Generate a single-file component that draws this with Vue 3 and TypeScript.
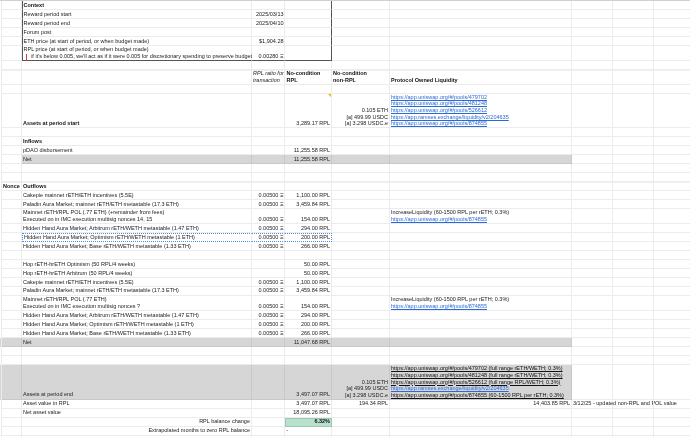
<script setup lang="ts">
interface Cell {
  t?: string
  lines?: string[]
  cls?: string
}
interface Row {
  h: number
  cls?: string
  a?: Cell
  b?: Cell
  c?: Cell
  d?: Cell
  e?: Cell
  f?: Cell
  g?: Cell
}
const E = '0.00500 Ξ'
const rows: Row[] = [
  { h: 9, cls: 'ctx first', b: { t: 'Context', cls: 'bold' } },
  { h: 9, cls: 'ctx', b: { t: 'Reward period start' }, c: { t: '2025/03/13', cls: 'right' } },
  { h: 9, cls: 'ctx', b: { t: 'Reward period end' }, c: { t: '2025/04/10', cls: 'right' } },
  { h: 9, cls: 'ctx', b: { t: 'Forum post' } },
  { h: 9, cls: 'ctx', b: { t: 'ETH price (at start of period, or when budget made)' }, c: { t: '$1,904.28', cls: 'right' } },
  { h: 15, cls: 'ctx last', b: { lines: ['RPL price (at start of period, or when budget made)', '     if it\'s below 0.005, we\'ll act as if it were 0.005 for discretionary spending to preserve budget'] }, c: { t: '0.00280 Ξ', cls: 'right' } },
  { h: 9 },
  { h: 15, cls: 'thicktop', c: { lines: ['RPL ratio for', 'transaction'], cls: 'ital' }, d: { lines: ['No-condition', 'RPL'], cls: 'bold' }, e: { lines: ['No-condition', 'non-RPL'], cls: 'bold' }, f: { t: 'Protocol Owned Liquidity', cls: 'bold' } },
  { h: 9 },
  {
    h: 34,
    b: { t: 'Assets at period start', cls: 'bold' },
    d: { t: '3,289.17 RPL', cls: 'right' },
    e: { lines: ['0.105 ETH', '[a] 499.99 USDC', '[a] 3.298 USDC.e'], cls: 'right tight' },
    f: { lines: ['https://app.uniswap.org/#/pools/479702', 'https://app.uniswap.org/#/pools/481248', 'https://app.uniswap.org/#/pools/526612', 'https://app.ramses.exchange/liquidity/v2/204635', 'https://app.uniswap.org/#/pools/874855'], cls: 'link tight' },
  },
  { h: 9 },
  { h: 9, b: { t: 'Inflows', cls: 'bold' } },
  { h: 9, b: { t: 'pDAO disbursement' }, d: { t: '11,255.58 RPL', cls: 'right' } },
  { h: 9, cls: 'grey', b: { t: 'Net' }, d: { t: '11,255.58 RPL', cls: 'right' } },
  { h: 9 },
  { h: 9 },
  { h: 9, cls: 'thicktop', a: { t: 'Nonce', cls: 'bold' }, b: { t: 'Outflows', cls: 'bold' } },
  { h: 9, b: { t: 'Cakepie mainnet rETH/ETH incentives (5.5E)' }, c: { t: E, cls: 'right' }, d: { t: '1,100.00 RPL', cls: 'right' } },
  { h: 9, b: { t: 'Paladin Aura Market; mainnet rETH/ETH metastable (17.3 ETH)' }, c: { t: E, cls: 'right' }, d: { t: '3,459.84 RPL', cls: 'right' } },
  {
    h: 15,
    b: { lines: ['Mainnet rETH/RPL POL (.77 ETH) (+remainder from fees)', 'Executed on in IMC execution multisig nonces 14, 15'] },
    c: { t: E, cls: 'right' },
    d: { t: '154.00 RPL', cls: 'right' },
    f: { lines: ['IncreaseLiquidity (60-1500 RPL per rETH; 0.3%)', 'https://app.uniswap.org/#/pools/874855'], cls: 'mixed' },
  },
  { h: 9, b: { t: 'Hidden Hand Aura Market; Arbitrum rETH/WETH metastable (1.47 ETH)' }, c: { t: E, cls: 'right' }, d: { t: '294.00 RPL', cls: 'right' } },
  { h: 9, cls: 'dashed', b: { t: 'Hidden Hand Aura Market; Optimism rETH/WETH metastable (1 ETH)' }, c: { t: E, cls: 'right' }, d: { t: '200.00 RPL', cls: 'right' } },
  { h: 9, b: { t: 'Hidden Hand Aura Market; Base rETH/WETH metastable (1.33 ETH)' }, c: { t: E, cls: 'right' }, d: { t: '266.00 RPL', cls: 'right' } },
  { h: 9 },
  { h: 9, b: { t: 'Hop rETH-hrETH Optimism (50 RPL/4 weeks)' }, d: { t: '50.00 RPL', cls: 'right' } },
  { h: 9, b: { t: 'Hop rETH-hrETH Arbitrum (50 RPL/4 weeks)' }, d: { t: '50.00 RPL', cls: 'right' } },
  { h: 9, b: { t: 'Cakepie mainnet rETH/ETH incentives (5.5E)' }, c: { t: E, cls: 'right' }, d: { t: '1,100.00 RPL', cls: 'right' } },
  { h: 8.5, b: { t: 'Paladin Aura Market; mainnet rETH/ETH metastable (17.3 ETH)' }, c: { t: E, cls: 'right' }, d: { t: '3,459.84 RPL', cls: 'right' } },
  {
    h: 15.5,
    b: { lines: ['Mainnet rETH/RPL POL (.77 ETH)', 'Executed on in IMC execution multisig nonces ?'] },
    c: { t: E, cls: 'right' },
    d: { t: '154.00 RPL', cls: 'right' },
    f: { lines: ['IncreaseLiquidity (60-1500 RPL per rETH; 0.3%)', 'https://app.uniswap.org/#/pools/874855'], cls: 'mixed' },
  },
  { h: 9, b: { t: 'Hidden Hand Aura Market; Arbitrum rETH/WETH metastable (1.47 ETH)' }, c: { t: E, cls: 'right' }, d: { t: '294.00 RPL', cls: 'right' } },
  { h: 9, b: { t: 'Hidden Hand Aura Market; Optimism rETH/WETH metastable (1 ETH)' }, c: { t: E, cls: 'right' }, d: { t: '200.00 RPL', cls: 'right' } },
  { h: 9, b: { t: 'Hidden Hand Aura Market; Base rETH/WETH metastable (1.33 ETH)' }, c: { t: E, cls: 'right' }, d: { t: '266.00 RPL', cls: 'right' } },
  { h: 9, cls: 'grey full', b: { t: 'Net' }, d: { t: '11,047.68 RPL', cls: 'right' } },
  { h: 8.5 },
  { h: 9 },
  {
    h: 35,
    cls: 'grey full',
    b: { t: 'Assets at period end' },
    d: { t: '3,497.07 RPL', cls: 'right' },
    e: { lines: ['0.105 ETH', '[a] 499.99 USDC', '[a] 3.298 USDC.e'], cls: 'right tight' },
    f: { lines: ['https://app.uniswap.org/#/pools/479702 (full range rETH/WETH; 0.3%)', 'https://app.uniswap.org/#/pools/481248 (full range rETH/WETH; 0.3%)', 'https://app.uniswap.org/#/pools/526612 (full range RPL/WETH; 0.3%)', 'https://app.ramses.exchange/liquidity/v2/204635', 'https://app.uniswap.org/#/pools/874855 (60-1500 RPL per rETH; 0.3%)'], cls: 'darklink tight' },
  },
  {
    h: 9,
    b: { t: 'Asset value in RPL' },
    d: { t: '3,497.07 RPL', cls: 'right' },
    e: { t: '194.34 RPL', cls: 'right' },
    f: { t: '14,403.85 RPL', cls: 'right' },
    g: { t: '3/12/25 - updated non-RPL and POL value' },
  },
  { h: 9, b: { t: 'Net asset value' }, d: { t: '18,095.26 RPL', cls: 'right' } },
  { h: 9, b: { t: 'RPL balance change', cls: 'right' }, d: { t: '6.32%', cls: 'right bold green' } },
  { h: 9, b: { t: 'Extrapolated months to zero RPL balance', cls: 'right' }, d: { t: '-' } },
  { h: 9 },
]
const cols = ['a', 'b', 'c', 'd', 'e', 'f', 'g', 'h', 'i'] as const
function cell(r: Row, c: (typeof cols)[number]): Cell | undefined {
  return c === 'h' || c === 'i' ? undefined : r[c]
}
</script>

<template>
  <div class="sheet">
    <div v-for="(r, i) in rows" :key="i" class="row" :class="r.cls" :style="{ height: r.h + 'px' }">
      <div class="gutter"></div>
      <div v-for="c in cols" :key="c" class="cell" :class="['col-' + c, cell(r, c)?.cls]">
        <template v-if="cell(r, c)?.lines">
          <span v-for="(l, j) in cell(r, c)?.lines" :key="j" class="line">{{ l }}</span>
        </template>
        <span v-else-if="cell(r, c)?.t" class="line">{{ cell(r, c)?.t }}</span>
      </div>
    </div>
    <span class="flag"></span>
    <span class="note"></span>
  </div>
</template>

<style scoped>
.sheet {
  position: relative;
  width: 690px;
  height: 437px;
  overflow: hidden;
  background: #fff;
  border-top: 1px solid #d0d0d0;
  box-sizing: border-box;
  font-family: "Liberation Sans", Arial, sans-serif;
  font-size: 5.5px;
  line-height: 7.2px;
  color: #222;
  filter: blur(0.3px);
}
.row {
  display: flex;
  box-sizing: border-box;
  position: relative;
}
.gutter {
  flex: 0 0 1.5px;
  border-right: 1px solid #eaeaea;
  box-sizing: border-box;
}
.cell {
  box-sizing: border-box;
  border-right: 1px solid #ececec;
  border-bottom: 1px solid #ececec;
  padding: 0 0.5px 0 1.5px;
  display: flex;
  flex-direction: column;
  justify-content: flex-end;
  white-space: pre;
  flex: none;
  position: relative;
}
.col-a { width: 20px; }
.col-b { width: 230px; }
.col-c { width: 33.5px; }
.col-d { width: 46.5px; }
.col-e { width: 58px; }
.col-f { width: 182px; }
.col-g { width: 41px; }
.col-h { width: 41px; }
.col-i { width: 37px; }
.line { display: block; }
.tight { line-height: 6.65px; }
.bold { font-weight: 700; color: #111; }
.ital { font-style: italic; }
.right { align-items: flex-end; text-align: right; }
.link .line, .mixed .line:last-child {
  color: #2a6ad8;
  text-decoration: underline;
}
.darklink .line { color: #111; text-decoration: underline; text-decoration-thickness: 1px; }
.darklink .line:nth-child(4) { color: #2a6ad8; }
.grey .cell { background: #d6d6d6; border-color: #c8c8c8; }
.grey .col-a { background: #fff; border-color: #ececec; }
.grey.full .col-a { background: #d6d6d6; border-color: #c8c8c8; }
.grey.full .gutter { background: #d6d6d6; }
.grey .col-g, .grey .col-h, .grey .col-i { background: #fff; border-color: #ececec; }
.green { background: #b7e1cd; border: 1px solid #9cc9b3; }
.ctx .col-b { border-left: 1px solid #555; padding-left: 1px; }
.ctx .col-d { border-right: 1px solid #555; }
.last .col-b, .last .col-c, .last .col-d { border-bottom: 1px solid #555; }
.thicktop .cell { border-top: 1.5px solid #f0f0f0; }
.dashed .col-b, .dashed .col-c, .dashed .col-d {
  border-top: 1px dotted #4a90e2;
  border-bottom: 1px dotted #4a90e2;
}
.dashed .col-b { border-left: 1px dotted #4a90e2; }
.dashed .col-d { border-right: 1px dotted #4a90e2; }
.flag {
  position: absolute;
  left: 25.5px;
  top: 53px;
  width: 1.2px;
  height: 6.5px;
  background: #e53935;
}
.note {
  position: absolute;
  left: 328px;
  top: 93px;
  width: 0;
  height: 0;
  border-top: 3px solid #f4b400;
  border-left: 3px solid transparent;
}
</style>
